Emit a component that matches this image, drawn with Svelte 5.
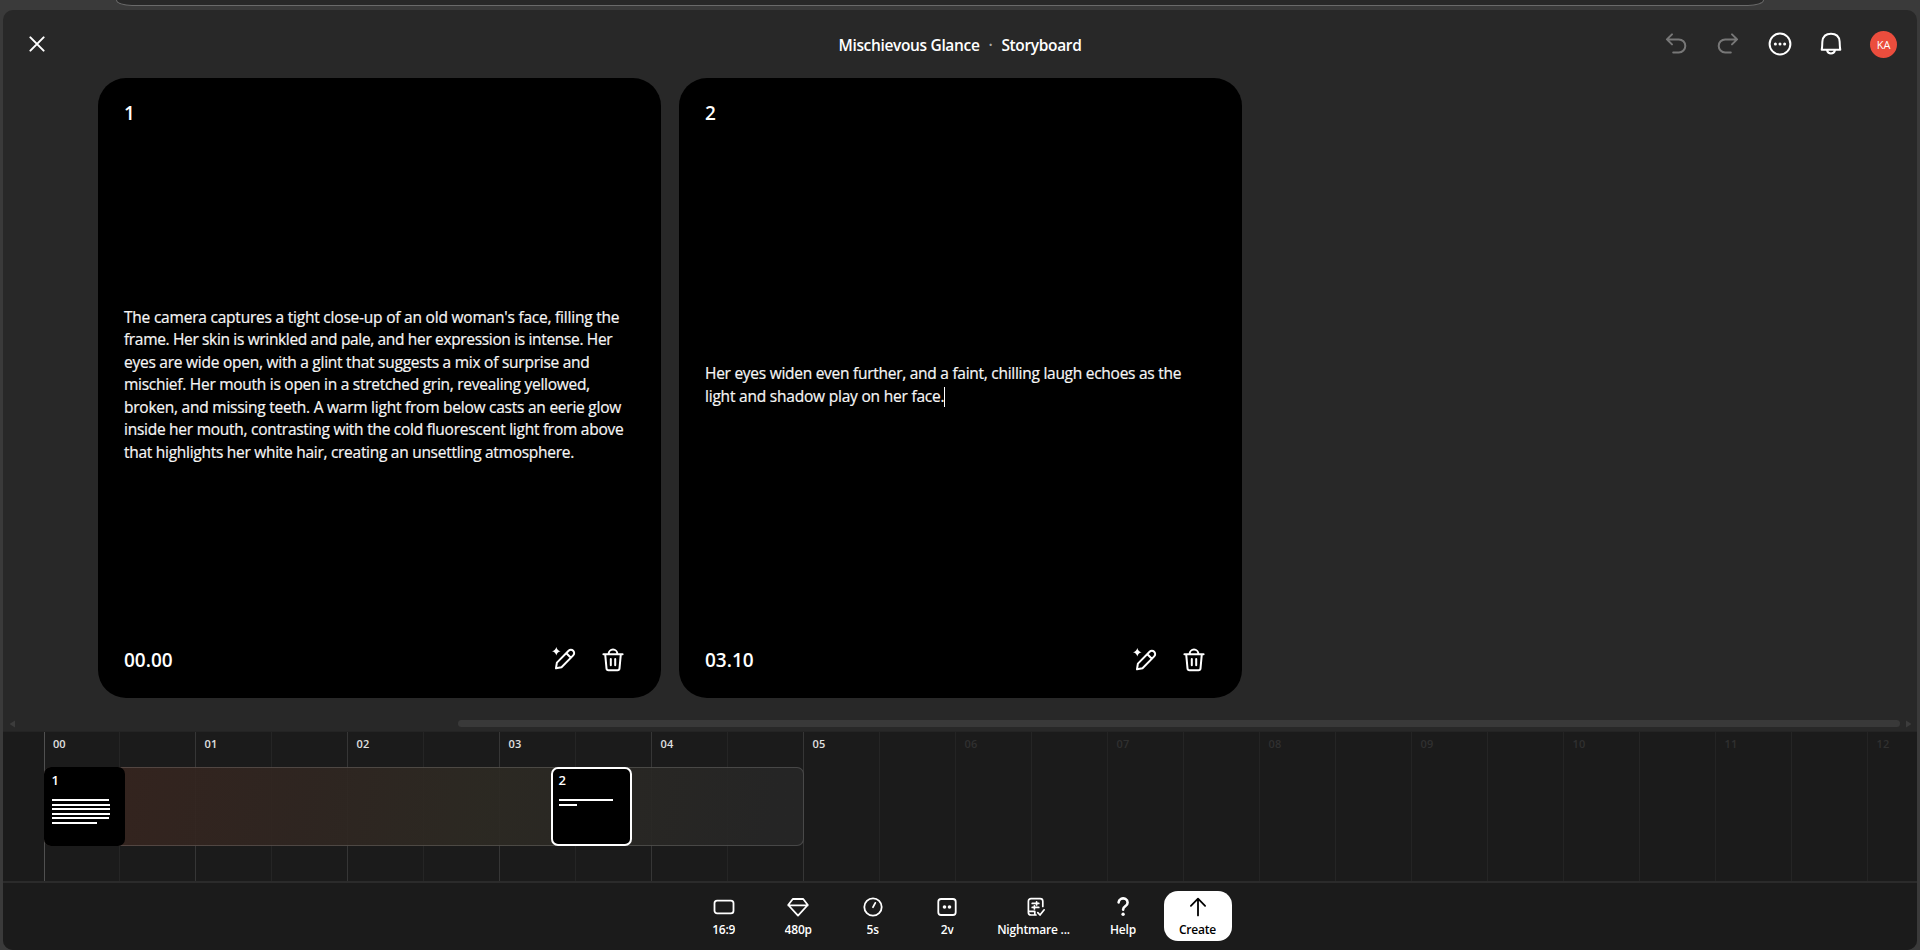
<script>
  let cards = [
    {
      id: 1,
      time: '00.00',
      lines: [
        ["The camera captures a tight close-up of an old woman's face, filling the", -0.215],
        ['frame. Her skin is wrinkled and pale, and her expression is intense. Her', -0.34],
        ['eyes are wide open, with a glint that suggests a mix of surprise and', -0.25],
        ['mischief. Her mouth is open in a stretched grin, revealing yellowed,', -0.27],
        ['broken, and missing teeth. A warm light from below casts an eerie glow', -0.24],
        ['inside her mouth, contrasting with the cold fluorescent light from above', -0.26],
        ['that highlights her white hair, creating an unsettling atmosphere.', -0.28]
      ],
      bars: [57, 58.5, 58.5, 58.5, 57, 45],
      start: 0
    },
    {
      id: 2,
      time: '03.10',
      lines: [
        ['Her eyes widen even further, and a faint, chilling laugh echoes as the', -0.27],
        ['light and shadow play on her face.', -0.21]
      ],
      bars: [54, 18],
      start: 507
    }
  ]

  let selected = 2
  const duration = 5
  const seconds = Array.from({ length: 13 }, (_, i) => i)
  const pad = (n) => String(n).padStart(2, '0')
</script>

<div class="browser-bar"></div>

<div class="panel">
  <header class="header">
    <button class="close" aria-label="Close">
      <svg width="16" height="16" viewBox="0 0 16 16"><path d="M1.4 1.4l13.2 13.2M14.6 1.4L1.4 14.6" /></svg>
    </button>
    <h1><span>Mischievous Glance</span><i>·</i><span>Storyboard</span></h1>
    <div class="actions">
      <svg class="dim" width="24" height="24" viewBox="0 0 24 24"><path d="M8 2.4L2.9 7.4L8 12.4M3.2 7.4h11.6a6.5 6.5 0 0 1 0 13H9.2" /></svg>
      <svg class="dim" width="24" height="24" viewBox="0 0 24 24"><path d="M16 2.4l5.1 5l-5.1 5M20.8 7.4H9.2a6.5 6.5 0 0 0 0 13h5.6" /></svg>
      <svg width="24" height="24" viewBox="0 0 24 24">
        <circle cx="12" cy="12" r="10.4" />
        <g class="solid"><circle cx="7.4" cy="12" r="1.5" /><circle cx="12" cy="12" r="1.5" /><circle cx="16.6" cy="12" r="1.5" /></g>
      </svg>
      <svg width="24" height="24" viewBox="0 0 24 24"><path d="M2.7 17.8C3.4 14.9 3.1 12 3.4 9.4C3.9 4.7 7.2 1.8 12 1.8s8.1 2.9 8.6 7.6c.3 2.6 0 5.5.7 8.4zM8 18.2a4.1 4.1 0 0 0 8 0" /></svg>
      <div class="avatar">KA</div>
    </div>
  </header>

  <main class="cards">
    {#each cards as card (card.id)}
      <article class="card">
        <div class="card-number">{card.id}</div>
        <div class="prompt">
          {#each card.lines as [line, tracking], i}
            <div style="letter-spacing: {tracking}px">{line}{#if card.id === selected && i === card.lines.length - 1}<span class="caret"></span>{/if}</div>
          {/each}
        </div>
        <footer class="card-footer">
          <span class="time">{card.time}</span>
          <svg class="edit" width="24" height="24" viewBox="0 0 24 24">
            <path d="M4 21.2l.9-5.6L16.6 3.8a3.2 3.2 0 0 1 4.6 4.6L9.5 20.2zM14.4 6.2l4.5 4.5" />
            <path class="solid" d="M4.3 0q.7 3.6 4.3 4.3q-3.6 .7-4.3 4.3q-.7-3.6-4.3-4.3q3.6-.7 4.3-4.3z" />
          </svg>
          <svg width="24" height="24" viewBox="0 0 24 24"><path d="M2.4 6.2h19.2M4.2 6.4l1.3 14a2 2 0 0 0 2 1.8h9a2 2 0 0 0 2-1.8l1.3-14M7.6 6a4.4 4.4 0 0 1 8.8 0M9.8 11v6.2M14.2 11v6.2" /></svg>
        </footer>
      </article>
    {/each}
  </main>

  <div class="scroller">
    <svg width="6" height="8" viewBox="0 0 6 8"><path d="M6 .5v7L.5 4z" /></svg>
    <div class="thumb"></div>
    <svg width="6" height="8" viewBox="0 0 6 8"><path d="M0 .5v7L5.5 4z" /></svg>
  </div>

  <section class="timeline">
    {#each seconds as s}
      <div class="second" class:off={s > duration} class:first={s === 0}>
        <span>{pad(s)}</span>
        <div class="half"></div>
      </div>
    {/each}
    <div class="clip"></div>
    {#each cards as card (card.id)}
      <div class="mini" class:selected={card.id === selected} style="left: {card.start + 40.6}px">
        <b>{card.id}</b>
        {#each card.bars as width}
          <div class="bar" style="width: {width}px"></div>
        {/each}
      </div>
    {/each}
  </section>

  <nav class="toolbar">
    <button class="tool">
      <svg width="24" height="24" viewBox="0 0 24 24"><rect x="2.5" y="5.7" width="19" height="12.6" rx="2.6" /></svg>
      <span>16:9</span>
    </button>
    <button class="tool">
      <svg width="24" height="24" viewBox="0 0 24 24"><path d="M6.8 4h10.4l4.6 6L12 20.6L2.2 10zM2.4 10.4h19.2" /></svg>
      <span>480p</span>
    </button>
    <button class="tool">
      <svg width="24" height="24" viewBox="0 0 24 24"><circle cx="12" cy="12" r="8.7" /><path d="M12 12.2l2.3-4.3" /></svg>
      <span>5s</span>
    </button>
    <button class="tool">
      <svg width="24" height="24" viewBox="0 0 24 24">
        <rect x="3.3" y="4" width="17.4" height="16" rx="2.8" />
        <g class="solid"><circle cx="9.5" cy="12" r="1.8" /><circle cx="14.5" cy="12" r="1.8" /></g>
      </svg>
      <span>2v</span>
    </button>
    <button class="tool preset">
      <svg width="24" height="24" viewBox="0 0 24 24"><path d="M12 20H7a2.6 2.6 0 0 1-2.6-2.6V6.2A2.6 2.6 0 0 1 7 3.6h9.2a2.6 2.6 0 0 1 2.6 2.6v5.2M8.2 8.4h6.6M12.6 6.8v3.2M8.2 12.4h6.6M10.4 10.8V14M4.6 16.4h6.2v3.4M13.8 17.6l2.2 2.4l4.2-5.2" /></svg>
      <span>Nightmare ...</span>
    </button>
    <button class="tool help">
      <svg width="24" height="24" viewBox="0 0 24 24"><path d="M7.6 7.4a4.5 4.2 0 1 1 6.8 3.8q-2.2 1.3-2.3 3.4" /><circle class="solid" cx="12.1" cy="19.3" r="1.7" /></svg>
      <span>Help</span>
    </button>
    <button class="tool create">
      <svg width="24" height="24" viewBox="0 0 24 24"><path d="M12 20.4V4M4.9 10.8L12 3.7l7.1 7.1" /></svg>
      <span>Create</span>
    </button>
  </nav>
</div>

<style>
  :global(body) {
    background: #3a3a3a;
    overflow: hidden;
  }

  :global(#app) {
    position: relative;
    font-family: 'Open Sans', 'Noto Sans', sans-serif;
    color: #fff;
  }

  button {
    background: none;
    border: none;
    padding: 0;
    color: inherit;
    font: inherit;
  }

  svg {
    display: block;
    flex: none;
    fill: none;
    stroke: currentColor;
    stroke-width: 2;
    stroke-linecap: round;
    stroke-linejoin: round;
  }

  .solid {
    fill: currentColor;
    stroke: none;
  }

  .browser-bar {
    box-sizing: border-box;
    width: 1648px;
    height: 6px;
    margin-left: 115.5px;
    border: 1px solid #6a6a6a;
    border-top: none;
    border-radius: 0 0 16px 16px / 0 0 6px 6px;
    background: #282828;
  }

  .panel {
    display: flex;
    flex-direction: column;
    width: 1914px;
    height: 940px;
    margin: 4px 0 0 3px;
    overflow: hidden;
    border-radius: 10px;
    background: #282828;
  }

  .header {
    display: grid;
    grid-template-columns: 1fr auto 1fr;
    align-items: center;
    height: 68px;
    box-sizing: border-box;
    padding: 0 20px 0 26px;
  }

  .close {
    width: 16px;
  }

  h1 {
    display: flex;
    gap: 9px;
    margin: 2px 0 0 -6px;
    font-size: 15.5px;
    font-weight: 600;
    line-height: 22px;
    letter-spacing: -0.34px;
  }

  h1 i {
    font-style: normal;
    color: #aaa;
  }

  .actions {
    display: flex;
    justify-content: flex-end;
    align-items: center;
    gap: 27.7px;
  }

  .dim {
    color: #777;
  }

  .avatar {
    width: 27px;
    height: 27px;
    margin-left: -1px;
    border-radius: 50%;
    background: #eb4d3d;
    font-size: 11px;
    line-height: 27px;
    letter-spacing: -0.2px;
    text-align: center;
  }

  .cards {
    display: flex;
    gap: 18px;
    height: 620px;
    padding-left: 95px;
  }

  .card {
    display: flex;
    flex-direction: column;
    justify-content: space-between;
    box-sizing: border-box;
    width: 563px;
    padding: 22px 27px 24px 26px;
    border-radius: 28px;
    background: #000;
  }

  .card-number,
  .time {
    font-size: 19px;
    font-weight: 600;
    line-height: 26px;
  }

  .prompt {
    margin-bottom: 3px;
    font-size: 15.5px;
    font-weight: 500;
    line-height: 22.55px;
    white-space: nowrap;
    color: #f6f6f6;
    -webkit-text-stroke: 0.2px #f6f6f6;
  }

  .caret {
    display: inline-block;
    width: 1px;
    height: 20px;
    vertical-align: -5px;
    background: #fff;
  }

  .card-footer {
    display: flex;
    align-items: center;
    height: 28px;
    padding-right: 9px;
  }

  .edit {
    margin: 0 25px 1px auto;
  }

  .scroller {
    display: flex;
    align-items: center;
    justify-content: space-between;
    height: 33px;
    box-sizing: border-box;
    padding: 22px 5px 4px 6px;
    color: #3c3c3c;
  }

  .scroller svg {
    fill: currentColor;
    stroke-width: 0;
  }

  .thumb {
    width: 1442px;
    height: 7px;
    margin: 0 6px 0 auto;
    border-radius: 4px;
    background: #393939;
  }

  .timeline {
    position: relative;
    display: flex;
    flex: none;
    box-sizing: border-box;
    height: 152px;
    overflow: hidden;
    padding-left: 40px;
    border-top: 1px solid #242424;
    border-bottom: 2px solid #2b2b2b;
    background: #1b1b1b;
  }

  .second {
    display: flex;
    flex: none;
    box-sizing: border-box;
    width: 152px;
    border-left: 1px solid #363636;
    font-size: 11px;
    font-weight: 600;
    color: #e0e0e0;
  }

  .second span {
    box-sizing: border-box;
    width: 75px;
    padding: 4px 0 0 8.6px;
    line-height: 15px;
  }

  .first {
    width: 151px;
    margin-left: 1px;
    border-color: #505050;
  }

  .first span {
    width: 74px;
    padding-left: 8px;
  }

  .off {
    border-color: #242424;
    color: #303030;
  }

  .half {
    border-left: 1px solid #252525;
  }

  .clip {
    position: absolute;
    top: 35px;
    left: 41px;
    box-sizing: border-box;
    width: 760px;
    height: 79px;
    border: 1px solid rgba(255, 255, 255, 0.16);
    border-radius: 7px;
    background: linear-gradient(100deg, rgba(56, 36, 30, 0.92), rgba(48, 38, 33, 0.92) 35%, rgba(45, 42, 35, 0.92) 58%, rgba(38, 38, 38, 0.92) 95%) border-box;
  }

  .mini {
    position: absolute;
    top: 35px;
    box-sizing: border-box;
    width: 81px;
    height: 79px;
    padding: 4px 8px;
    border-radius: 7px;
    background: #000;
  }

  .mini.selected {
    padding: 2px 6px;
    border: 2px solid #fff;
  }

  .mini b {
    display: block;
    height: 28px;
    font-size: 13px;
    font-weight: 600;
    line-height: 18px;
  }

  .bar {
    height: 2px;
    margin-bottom: 2.5px;
    background: #fff;
  }

  .toolbar {
    display: flex;
    flex: 1;
    padding: 8px 0 0 683.5px;
    background: #1b1b1b;
  }

  .tool {
    display: flex;
    flex-direction: column;
    align-items: center;
    box-sizing: border-box;
    width: 74.5px;
    height: 50px;
    padding-top: 4px;
    font-size: 12px;
    font-weight: 600;
    line-height: 18px;
    letter-spacing: -0.2px;
    white-space: nowrap;
  }

  .tool svg {
    stroke-width: 1.8;
  }

  .tool span {
    margin-top: 2px;
    clip-path: inset(0 0 1px);
  }

  .preset {
    width: 98px;
  }

  .preset svg {
    margin-left: 4px;
    stroke-width: 1.7;
  }

  .help {
    width: 81px;
  }

  .help svg {
    stroke-width: 2.6;
  }

  .create {
    width: 68px;
    border-radius: 14px;
    background: #fff;
    color: #000;
  }
</style>
